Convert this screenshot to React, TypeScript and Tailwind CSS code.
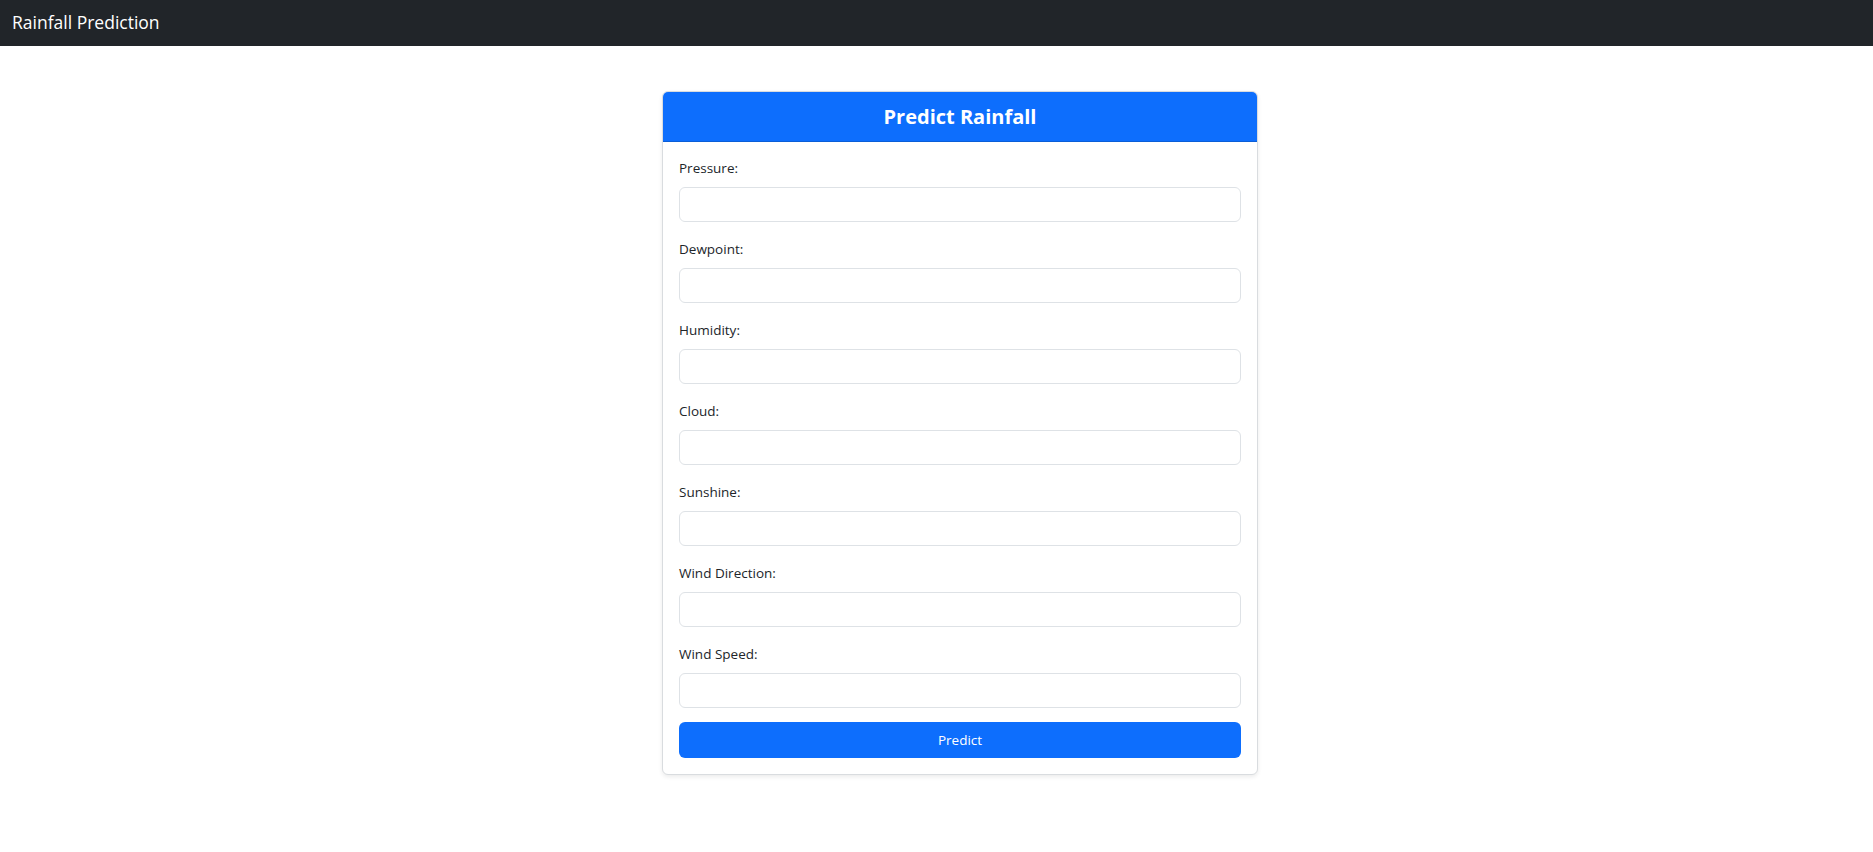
import React from 'react';

const fields = [
  'Pressure',
  'Dewpoint',
  'Humidity',
  'Cloud',
  'Sunshine',
  'Wind Direction',
  'Wind Speed',
];

const App: React.FC = () => {
  return (
    <div className="min-h-screen bg-white font-['Open_Sans',sans-serif] text-[#212529]">
      <nav className="h-[46px] bg-[#212529] flex items-center px-3">
        <span className="text-white text-[17.5px] leading-none">Rainfall Prediction</span>
      </nav>

      <div className="ml-[662px] mt-[45px] w-[596px]">
        <div className="border border-[#d9dcdf] rounded-[6px] shadow-[0_2px_4px_rgba(0,0,0,0.08)] overflow-hidden bg-white">
          <div className="h-[50px] bg-[#0d6efd] border-b border-[#0b5ed7] flex items-center justify-center">
            <h3 className="text-white font-bold text-[20px] leading-none">Predict Rainfall</h3>
          </div>
          <form className="p-4" onSubmit={(e) => e.preventDefault()}>
            {fields.map((name, i) => (
              <div key={name} className={i === fields.length - 1 ? 'mb-[14px]' : 'mb-[17px]'}>
                <label className="block text-[13.5px] leading-[21px] mb-2 text-[#212529]">{name}:</label>
                <input
                  type="text"
                  className="block w-full h-[35px] border border-[#dee2e6] rounded-[6px] px-3 text-[14px] outline-none"
                />
              </div>
            ))}
            <button
              type="submit"
              className="w-full h-[36px] bg-[#0d6efd] text-white text-[13.5px] rounded-[6px]"
            >
              Predict
            </button>
          </form>
        </div>
      </div>
    </div>
  );
};

export default App;
